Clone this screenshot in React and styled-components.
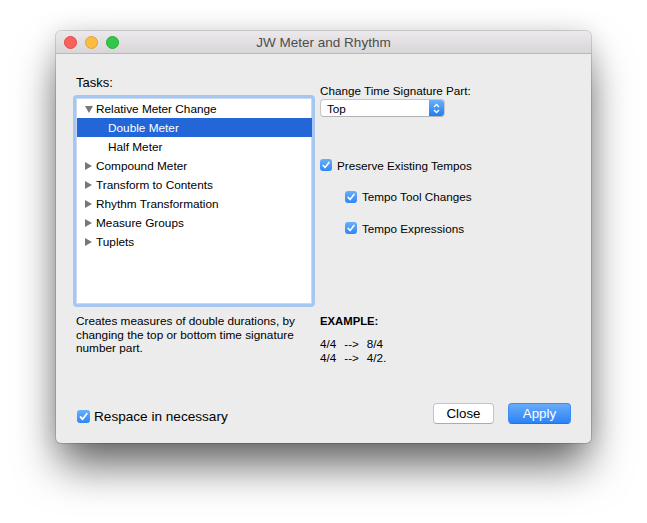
import React, { useState } from "react";
import styled, { createGlobalStyle } from "styled-components";

const GlobalStyle = createGlobalStyle`
  html, body {
    margin: 0;
    padding: 0;
    background: #ffffff;
  }
  body {
    font-family: "Liberation Sans", Arial, sans-serif;
    color: #000;
  }
`;

const Page = styled.div`
  width: 647px;
  height: 523px;
  padding: 31px 0 0 56px;
  box-sizing: border-box;
`;

const Window = styled.div`
  width: 535px;
  height: 412px;
  background: #ececec;
  border-radius: 5px;
  display: flex;
  flex-direction: column;
  box-shadow: 0 26px 44px -4px rgba(0, 0, 0, 0.6), 0 0 26px rgba(0, 0, 0, 0.13),
    0 0 0 1px rgba(0, 0, 0, 0.14);
  overflow: hidden;
`;

const TitleBar = styled.div`
  height: 22px;
  flex: none;
  display: flex;
  align-items: center;
  position: relative;
  background: linear-gradient(#ebe9eb, #d8d6d8);
  border-bottom: 1px solid #b9b9b9;
  padding-left: 8px;
`;

const Lights = styled.div`
  display: flex;
  gap: 8px;
`;

const Light = styled.span`
  width: 11px;
  height: 11px;
  border-radius: 50%;
  background: ${(p) => p.color};
  border: 0.5px solid ${(p) => p.edge};
`;

const Title = styled.div`
  position: absolute;
  left: 0;
  right: 0;
  text-align: center;
  font-size: 13.5px;
  color: #4d4d4d;
  pointer-events: none;
`;

const Body = styled.div`
  flex: 1;
  display: flex;
  flex-direction: column;
  padding: 21px 20px 19px 17px;
`;

const Columns = styled.div`
  display: grid;
  grid-template-columns: 242px 1fr;
  column-gap: 5px;
  align-items: start;
`;

const Label = styled.div`
  font-size: ${(p) => p.size || 11.7}px;
  line-height: ${(p) => p.lh || 14}px;
  padding-left: ${(p) => p.indent || 0}px;
  color: #000;
`;

const ListBox = styled.div`
  margin-top: 4px;
  height: 205px;
  background: #fff;
  border: 3px solid #a6c7f2;
  border-radius: 4px;
  padding: 0 0 1px 1px;
  box-shadow: inset 0 0 0 1px #c9d8ee;
`;

const Row = styled.div`
  height: 19px;
  display: flex;
  align-items: center;
  padding-left: ${(p) => (p.child ? 31 : 8)}px;
  font-size: 11.8px;
  background: ${(p) => (p.selected ? "#2366d8" : "transparent")};
  color: ${(p) => (p.selected ? "#fff" : "#000")};
  cursor: default;
  &:first-child {
    margin-top: 1px;
  }
`;

const Disclosure = styled.span`
  width: 0;
  height: 0;
  margin-right: ${(p) => (p.open ? 3 : 4)}px;
  ${(p) =>
    p.open
      ? `border-left: 4px solid transparent;
         border-right: 4px solid transparent;
         border-top: 7px solid #777;
         margin-top: 1px;`
      : `border-top: 4.5px solid transparent;
         border-bottom: 4.5px solid transparent;
         border-left: 7px solid #777;`}
`;

const RightTop = styled.div`
  margin-top: 9px;
  display: flex;
  flex-direction: column;
`;

const Popup = styled.div`
  margin-top: 1px;
  width: 125px;
  height: 18px;
  box-sizing: border-box;
  display: flex;
  align-items: stretch;
  background: #fff;
  border: 1px solid #c6c6c6;
  border-bottom-color: #b3b3b3;
  border-radius: 4px;
  overflow: hidden;
  font-size: 11.7px;
`;

const PopupText = styled.span`
  flex: 1;
  display: flex;
  align-items: center;
  padding-left: 6px;
`;

const PopupArrows = styled.span`
  width: 15px;
  display: flex;
  align-items: center;
  justify-content: center;
  background: linear-gradient(#6cb0fa, #1e7ef5);
`;

const CheckList = styled.div`
  margin-top: 39px;
  display: flex;
  flex-direction: column;
  gap: 13.5px;
`;

const CheckRow = styled.label`
  display: flex;
  align-items: center;
  height: ${(p) => (p.big ? 16 : 18)}px;
  padding-left: ${(p) => p.indent || 0}px;
  font-size: ${(p) => (p.big ? 13.6 : 11.7)}px;
  color: #000;
`;

const Box = styled.span`
  width: ${(p) => (p.big ? 13 : 12)}px;
  height: ${(p) => (p.big ? 13 : 12)}px;
  margin-right: ${(p) => (p.big ? 4 : 5)}px;
  flex: none;
  border-radius: 3px;
  display: flex;
  align-items: center;
  justify-content: center;
  background: ${(p) => (p.checked ? "linear-gradient(#6aaefa, #2f86f5)" : "#fff")};
  border: ${(p) => (p.checked ? "none" : "1px solid #b5b5b5")};
`;

const Description = styled.div`
  margin-top: 8px;
  padding-left: 3px;
  font-size: 11.8px;
  line-height: 13.7px;
  width: 236px;
`;

const Example = styled.div`
  margin-top: 7.5px;
  font-size: 11.7px;
  line-height: 13.5px;
`;

const ExampleHead = styled.div`
  font-weight: bold;
  font-size: 11.3px;
  margin-bottom: 9px;
`;

const ExampleLine = styled.div`
  display: flex;
`;

const Arrow = styled.span`
  margin: 0 8px;
`;

const Footer = styled.div`
  margin-top: auto;
  display: flex;
  align-items: flex-end;
  padding-left: 4px;
`;

const Buttons = styled.div`
  margin-left: auto;
  display: flex;
  gap: 14px;
`;

const Button = styled.button`
  height: 21px;
  width: ${(p) => p.w}px;
  padding: 0;
  font-family: "Liberation Sans", Arial, sans-serif;
  font-size: 13.3px;
  border-radius: 4px;
  cursor: pointer;
  color: ${(p) => (p.primary ? "#fff" : "#000")};
  background: ${(p) => (p.primary ? "linear-gradient(#68abf9, #2a83f7)" : "#fff")};
  border: 1px solid ${(p) => (p.primary ? "#3d8cf5" : "#c4c4c4")};
  border-bottom-color: ${(p) => (p.primary ? "#2672e0" : "#acacac")};
`;

function Check({ big }) {
  const s = big ? 13 : 12;
  return (
    <svg width={s} height={s} viewBox="0 0 12 12">
      <path
        d="M3.2 6.4 L5.1 8.6 L9 3.4"
        fill="none"
        stroke="#fff"
        strokeWidth="1.6"
        strokeLinecap="round"
        strokeLinejoin="round"
      />
    </svg>
  );
}

function Checkbox({ label, checked, onToggle, indent, big }) {
  return (
    <CheckRow indent={indent} big={big} onClick={onToggle}>
      <Box checked={checked} big={big}>
        {checked && <Check big={big} />}
      </Box>
      {label}
    </CheckRow>
  );
}

const tasks = [
  { name: "Relative Meter Change", open: true },
  { name: "Double Meter", child: true },
  { name: "Half Meter", child: true },
  { name: "Compound Meter" },
  { name: "Transform to Contents" },
  { name: "Rhythm Transformation" },
  { name: "Measure Groups" },
  { name: "Tuplets" },
];

export default function App() {
  const [selected, setSelected] = useState("Double Meter");
  const [checks, setChecks] = useState({
    preserve: true,
    tool: true,
    expr: true,
    respace: true,
  });
  const toggle = (k) => setChecks({ ...checks, [k]: !checks[k] });

  return (
    <Page>
      <GlobalStyle />
      <Window>
        <TitleBar>
          <Lights>
            <Light color="#fc605c" edge="#de4a45" />
            <Light color="#fdbc40" edge="#dea236" />
            <Light color="#34c84a" edge="#27aa35" />
          </Lights>
          <Title>JW Meter and Rhythm</Title>
        </TitleBar>
        <Body>
          <Columns>
            <div>
              <Label size={13} lh={16} indent={3}>Tasks:</Label>
              <ListBox>
                {tasks.map((t) => (
                  <Row
                    key={t.name}
                    child={t.child}
                    selected={selected === t.name}
                    onClick={() => setSelected(t.name)}
                  >
                    {!t.child && <Disclosure open={t.open} />}
                    {t.name}
                  </Row>
                ))}
              </ListBox>
            </div>
            <RightTop>
              <Label>Change Time Signature Part:</Label>
              <Popup>
                <PopupText>Top</PopupText>
                <PopupArrows>
                  <svg width="7" height="11" viewBox="0 0 7 11">
                    <path
                      d="M1 4 L3.5 1.5 L6 4 M1 7 L3.5 9.5 L6 7"
                      fill="none"
                      stroke="#fff"
                      strokeWidth="1.3"
                    />
                  </svg>
                </PopupArrows>
              </Popup>
              <CheckList>
                <Checkbox
                  label="Preserve Existing Tempos"
                  checked={checks.preserve}
                  onToggle={() => toggle("preserve")}
                />
                <Checkbox
                  label="Tempo Tool Changes"
                  indent={25}
                  checked={checks.tool}
                  onToggle={() => toggle("tool")}
                />
                <Checkbox
                  label="Tempo Expressions"
                  indent={25}
                  checked={checks.expr}
                  onToggle={() => toggle("expr")}
                />
              </CheckList>
            </RightTop>
            <Description>
              Creates measures of double durations, by changing the top or bottom
              time signature number part.
            </Description>
            <Example>
              <ExampleHead>EXAMPLE:</ExampleHead>
              <ExampleLine>
                <span>4/4</span>
                <Arrow>--&gt;</Arrow>
                <span>8/4</span>
              </ExampleLine>
              <ExampleLine>
                <span>4/4</span>
                <Arrow>--&gt;</Arrow>
                <span>4/2.</span>
              </ExampleLine>
            </Example>
          </Columns>
          <Footer>
            <Checkbox
              big
              label="Respace in necessary"
              checked={checks.respace}
              onToggle={() => toggle("respace")}
            />
            <Buttons>
              <Button w={61}>Close</Button>
              <Button w={63} primary>
                Apply
              </Button>
            </Buttons>
          </Footer>
        </Body>
      </Window>
    </Page>
  );
}
